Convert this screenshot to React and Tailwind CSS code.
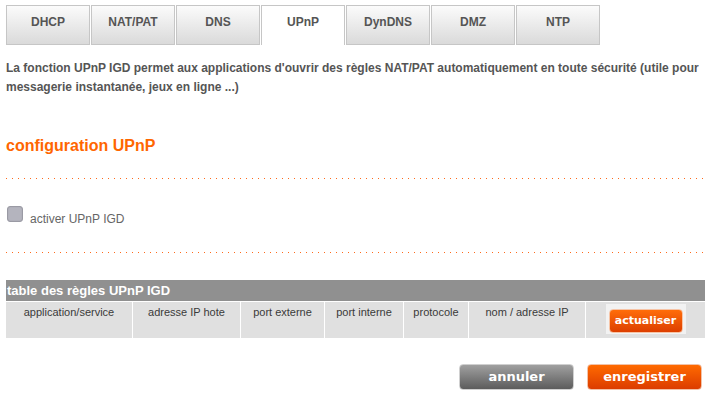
const TABS = ['DHCP', 'NAT/PAT', 'DNS', 'UPnP', 'DynDNS', 'DMZ', 'NTP'];

const COLUMNS = [
  { label: 'application/service', w: 'w-[126px]' },
  { label: 'adresse IP hote', w: 'w-[108px] border-l' },
  { label: 'port externe', w: 'w-[84px] border-l' },
  { label: 'port interne', w: 'w-[79px] border-l' },
  { label: 'protocole', w: 'w-[65px] border-l' },
  { label: 'nom / adresse IP', w: 'w-[117px] border-l' },
];

function Dots() {
  return (
    <div className="h-px w-[697px] bg-[repeating-linear-gradient(to_right,#ff6a1a_0px,#ff6a1a_1px,transparent_1px,transparent_6px)]" />
  );
}

export default function App() {
  const active = 'UPnP';

  return (
    <div className="w-[706px] h-[396px] overflow-hidden bg-white font-['Liberation_Sans',Arial,sans-serif]">
      <div className="flex gap-px pt-[5px] pl-[6px]">
        {TABS.map(tab => (
          <div
            key={tab}
            className={`w-[84px] h-[40px] border border-[#c6c6c6] text-center text-[12px] leading-[14px] font-bold pt-[9px] ${
              tab === active
                ? 'bg-white border-b-0 text-[#555]'
                : 'bg-[linear-gradient(to_bottom,#fbfbfb,#dadada)] text-[#555]'
            }`}
          >
            {tab}
          </div>
        ))}
      </div>

      <div className="px-[6px]">
        <p className="mt-[14px] text-[12px] leading-[19px] font-bold text-[#555]">
          La fonction UPnP IGD permet aux applications d'ouvrir des règles NAT/PAT automatiquement en toute sécurité (utile pour messagerie instantanée, jeux en ligne ...)
        </p>

        <h2 className="mt-[39px] text-[16px] leading-[20px] font-bold text-[#ff6600]">configuration UPnP</h2>

        <div className="mt-[22px]">
          <Dots />
        </div>

        <div className="mt-[27px] flex items-start">
          <div className="ml-px w-[16px] h-[16px] rounded-[3px] border border-[#9a9aa4] bg-[#b4b4be] shadow-[inset_0_0_1px_rgba(0,0,0,0.2)]" />
          <span className="ml-[7px] mt-[6px] text-[12px] leading-[14px] text-[#666]">activer UPnP IGD</span>
        </div>

        <div className="mt-[26px]">
          <Dots />
        </div>

        <div className="mt-[27px] w-[699px]">
          <div className="h-[21px] bg-[#909090] pl-px text-[13px] leading-[21px] font-bold text-white">
            table des règles UPnP IGD
          </div>
          <div className="flex h-[37px] border-t border-white">
            {COLUMNS.map(col => (
              <div
                key={col.label}
                className={`${col.w} border-white bg-[#e0e0e0] pt-[4px] text-center text-[11px] leading-[13px] text-[#3a3a3a]`}
              >
                {col.label}
              </div>
            ))}
            <div className="w-[120px] border-l border-white bg-[#e0e0e0] pt-[2px] flex justify-center">
              <div className="w-[80px] h-[30px] bg-[#f2f2f2] p-[3px]">
                <button className="w-[74px] h-[24px] rounded-[4px] border border-[#f7c4a6] bg-[linear-gradient(to_bottom,#ff6d0a,#dd3f00)] text-white text-[11px] font-bold font-['DejaVu_Sans',Verdana,sans-serif] leading-[20px]">
                  actualiser
                </button>
              </div>
            </div>
          </div>
        </div>

        <div className="mt-[26px] -mr-[2px] flex justify-end gap-[13px]">
          <button className="w-[115px] h-[26px] rounded-[4px] border border-[#d0d0d0] bg-[linear-gradient(to_bottom,#a0a0a0,#5c5c5c)] text-white text-[13px] font-bold font-['DejaVu_Sans',Verdana,sans-serif] leading-[22px]">
            annuler
          </button>
          <button className="w-[115px] h-[26px] rounded-[4px] border border-[#f2c2a8] bg-[linear-gradient(to_bottom,#ff6a00,#dc3c00)] text-white text-[13px] font-bold font-['DejaVu_Sans',Verdana,sans-serif] leading-[22px]">
            enregistrer
          </button>
        </div>
      </div>
    </div>
  );
}
